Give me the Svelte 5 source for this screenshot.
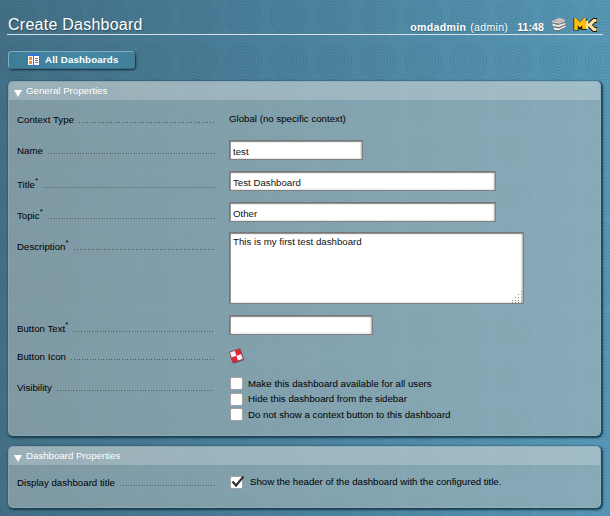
<script>
  const rows = [
    { id: 'context', label: 'Context Type', h: 31, pad: 10, kind: 'text', value: 'Global (no specific context)' },
    { id: 'name', label: 'Name', h: 31, pad: 10, kind: 'input', value: 'test', w: 134 },
    { id: 'title', label: 'Title', star: true, h: 31, pad: 13, kind: 'input', value: 'Test Dashboard', w: 267 },
    { id: 'topic', label: 'Topic', star: true, h: 30, pad: 13, kind: 'input', value: 'Other', w: 267 },
    { id: 'description', label: 'Description', star: true, h: 83, pad: 14, kind: 'area', value: 'This is my first test dashboard' },
    { id: 'button', label: 'Button Text', star: true, h: 31, pad: 13, kind: 'input', value: '', w: 144 },
    { id: 'icon', label: 'Button Icon', h: 31, pad: 10, kind: 'icon' },
    { id: 'visibility', label: 'Visibility', h: 64, pad: 10, kind: 'checks' }
  ];
  const options = [
    'Make this dashboard available for all users',
    'Hide this dashboard from the sidebar',
    'Do not show a context button to this dashboard'
  ];
  const rings = [3, 6, 9, 12, 15, 18];
</script>

{#snippet label(text, star, pad)}
  <div class="label" style:padding-top="{pad}px">
    <span>{text}{#if star}<sup>*</sup>{/if}</span>
    <svg class="dots" height="1" shape-rendering="crispEdges"><line x1="1" x2="100%" y1=".5" y2=".5" stroke="#4a5c64" stroke-width="1" stroke-dasharray="1 2 1 2 1 1" /></svg>
  </div>
{/snippet}

<div class="page">
  <svg class="pattern" width="610" height="516" aria-hidden="true">
    <defs>
      <pattern id="rings" width="45" height="45" patternUnits="userSpaceOnUse" x="-4" y="-6">
        {#each rings as r}
          <circle cx="22.5" cy="22.5" {r} fill="none" stroke="#123445" stroke-opacity=".1" stroke-width="1.1" />
        {/each}
      </pattern>
      <pattern id="weave" width="3" height="3" patternUnits="userSpaceOnUse">
        <path d="M-1 2L1 4M-1 -1L4 4M2 -1L4 1" stroke="#123445" stroke-opacity=".17" stroke-width=".9" />
      </pattern>
    </defs>
    <rect width="610" height="516" fill="url(#weave)" />
    <rect width="610" height="516" fill="url(#rings)" />
  </svg>
  <div class="content">
    <header>
      <h1>Create Dashboard</h1>
      <div class="user"><b>omdadmin</b><span>(admin)</span><b class="time">11:48</b></div>
      <svg class="stack" width="16" height="16" viewBox="0 0 16 16">
        <path d="M2 10l6-1 6-1 1 2-7 4H4l-2-2z" fill="#777" />
        <path d="M2 10.500l6 1 6-3 1 1-7 3.500H4z" fill="#f4f4f4" />
        <path d="M1 6l6-1 8 1-1 2-6 3-6-2z" fill="#777" />
        <path d="M1 6.500l6 1.500 7-2 1 1-7 3-6-1z" fill="#e8e8e8" />
        <path d="M1 3.500L8 1l6 1 1 2-6 3-7-1z" fill="#858585" />
        <path d="M2 3.500L8 1l5 1v1L8 5z" fill="#c6c6c6" />
        <path d="M1 4.500L8 6l6-2.500" fill="none" stroke="#eee" />
      </svg>
      <svg class="mk" width="25" height="14" viewBox="0 0 25 14" fill="none" stroke-linejoin="miter">
        <path d="M3 12.500V3l4 5 4-5v9M13 7h3M24 2.500h-3l-4.500 4.500 4.500 4.500h3" stroke="#1a1608" stroke-width="5" />
        <path d="M3 12V2.500L7 7l4-4.500V11" stroke="#fdc010" stroke-width="3.600" />
        <path d="M12.500 7h4M23.500 2.500H21l-4.500 4.500 4.500 4.500h2.500" stroke="#ffe29a" stroke-width="3.200" />
        <path d="M14 3v8" stroke="#ffe29a" stroke-width="2.400" />
      </svg>
    </header>

    <button class="all">
      <svg width="13" height="12" viewBox="0 0 13 12">
        <path d="M0 0h13v12H0z" fill="#2d74dc" />
        <path d="M1 2h5v9H1zM7 2h5v9H7z" fill="#fff" />
        <path d="M2 3h3v3H2zM2 7h3v3H2z" fill="#ef8b32" />
        <path d="M8 4.500h3M8 6.500h3M8 8.500h3" stroke="#667787" />
      </svg>
      <span>All Dashboards</span>
    </button>

    <section class="general">
      <h2><i></i>General Properties</h2>
      {#each rows as row (row.id)}
        <div class="row" style:height="{row.h}px">
          {@render label(row.label, row.star, row.pad)}
          <div class="value {row.kind}">
            {#if row.kind === 'text'}
              {row.value}
            {:else if row.kind === 'input'}
              <input type="text" value={row.value} style:width="{row.w}px" />
            {:else if row.kind === 'area'}
              <div class="areabox">
                <textarea value={row.value}></textarea>
                <svg class="grip" width="12" height="12" viewBox="0 0 12 12">
                  <path d="M10 .5h1M7 3.500h4M4 6.500h7M1 9.500h10M1 11.500h10" stroke="#888" stroke-dasharray="1 2" />
                </svg>
              </div>
            {:else if row.kind === 'icon'}
              <svg width="16" height="16" viewBox="0 0 16 16">
                <g transform="rotate(-18 8 8)">
                  <path d="M2.500 3h11v11h-11z" fill="#5c4450" />
                  <path d="M2 2h11v11H2z" fill="#f2f2fa" />
                  <path d="M7.500 2H13v5.500H7.500zM2 7.500h5.500V13H2z" fill="#e42732" />
                  <path d="M2 2h11v11H2z" fill="none" stroke="#9a3944" stroke-width=".8" />
                </g>
              </svg>
            {:else}
              {#each options as option}
                <label><span class="box"></span><span>{option}</span></label>
              {/each}
            {/if}
          </div>
        </div>
      {/each}
    </section>

    <section class="dash">
      <h2><i></i>Dashboard Properties</h2>
      <div class="row">
        {@render label('Display dashboard title', false, 12)}
        <div class="value show">
          <span class="box">
            <svg width="16" height="14" viewBox="0 0 16 14"><path d="M2.500 6.500l3.500 4 7.500-9" fill="none" stroke="#333" stroke-width="2.200" /></svg>
          </span>
          <span>Show the header of the dashboard with the configured title.</span>
        </div>
      </div>
    </section>
  </div>
</div>

<style>
  :global(body) { margin: 0; }
  .page {
    position: relative;
    width: 610px;
    height: 516px;
    overflow: hidden;
    background: linear-gradient(90deg, #457289 0%, #4d849f 45%, #5a9cbb 100%);
    font: 9.700px/12px "Liberation Sans", Arial, sans-serif;
    letter-spacing: 0;
    color: #000;
  }
  .pattern { position: absolute; inset: 0; }
  .content { position: relative; display: flex; flex-direction: column; height: 516px; }
  header {
    display: flex;
    box-sizing: border-box;
    height: 35px;
    margin: 0 7px 0 7px;
    border-bottom: 1px solid #d5e2ea;
    color: #fff;
  }
  h1 { margin: 15px auto 0 1px; font-size: 16px; line-height: 19px; font-weight: 400; letter-spacing: .25px; text-shadow: 1px 1px 1px #0005; }
  .user { display: flex; gap: 4px; margin-top: 21px; font-size: 10.500px; letter-spacing: .35px; text-shadow: 0 1px 1px #0004; }
  .time { margin-left: 5px; letter-spacing: .1px; }
  .stack { margin: 17px 0 0 7px; }
  .mk { margin: 18px 5px 0 6px; }
  .all {
    display: flex;
    align-items: center;
    box-sizing: border-box;
    width: 127px;
    height: 18px;
    margin: 16px 0 0 8px;
    padding: 0 0 0 18px;
    gap: 5px;
    border: 1px solid #70a3b9;
    border-color: #83adc0 #4d7c93 #3e6c83 #83adc0;
    border-radius: 4px;
    background: linear-gradient(90deg, #3f7b96, #4589a6 60%, #427f9a);
    box-shadow: 1px 1px 2px #102c3c;
    color: #fff;
    font: bold 9.700px/12px "Liberation Sans", Arial, sans-serif;
    letter-spacing: .17px;
  }
  .all svg { margin-top: -1px; }
  section {
    box-sizing: border-box;
    width: 593px;
    margin-left: 8px;
    border: 1px solid #bdd0d933;
    border-radius: 5px;
    background: rgb(176 189 190 / .55);
    box-shadow: 1px 1px 2px 1px #17384aee;
    overflow: hidden;
  }
  .general { height: 355px; margin-top: 12px; }
  .dash { height: 62px; margin-top: 10px; }
  h2 {
    display: flex;
    align-items: center;
    height: 18px;
    margin: 0;
    background: #ffffff38;
    color: #fff;
    font: 400 9.700px/18px "Liberation Sans", Arial, sans-serif;
  }
  i { margin: 4px 4px 0 5px; border: solid transparent; border-width: 7px 4px 0; border-top-color: #fff; }
  .row { display: flex; }
  .general h2 + .row { margin-top: 4px; }
  .label { display: flex; box-sizing: border-box; width: 198px; margin: 0 14px 0 8px; white-space: nowrap; }
  .label > span { flex: none; }
  sup { font-size: 8px; line-height: 0; vertical-align: 5px; }
  .dots { flex: 1; min-width: 0; margin: 8px 0 0 4px; }
  .value.text { padding-top: 9px; }
  .value.input { padding-top: 5px; }
  input, textarea {
    display: block;
    box-sizing: border-box;
    margin: 0;
    border: 1px solid #808080;
    border-top-color: #777;
    border-left-color: #777;
    outline: 0;
    background: #fff;
    box-shadow: inset 0 1px 1px #888, inset -1px 0 2px #aaa, inset 1px 0 0 #999;
    color: #111;
    font: 9.700px/12px "Liberation Sans", Arial, sans-serif;
    letter-spacing: 0;
  }
  input { height: 20px; padding: 3px 3px 0; }
  .area { padding-top: 5px; }
  .areabox { position: relative; }
  textarea { width: 295px; height: 72px; padding: 3px 3px; resize: none; }
  .grip { position: absolute; right: 1px; bottom: 1px; }
  .value.icon { padding-top: 7px; }
  .checks { padding-top: 4px; }
  label { display: flex; align-items: center; height: 15.500px; gap: 5px; }
  .box { box-sizing: border-box; flex: none; width: 13px; height: 13px; margin-left: 1px; border: 1px solid #a3a3a3; border-radius: 2px; background: #fff; }
  .show { display: flex; align-items: center; height: 12px; padding-top: 11px; gap: 7px; letter-spacing: -.03px; }
  .show svg { display: block; overflow: visible; margin: -2px 0 0 -1px; }
</style>
